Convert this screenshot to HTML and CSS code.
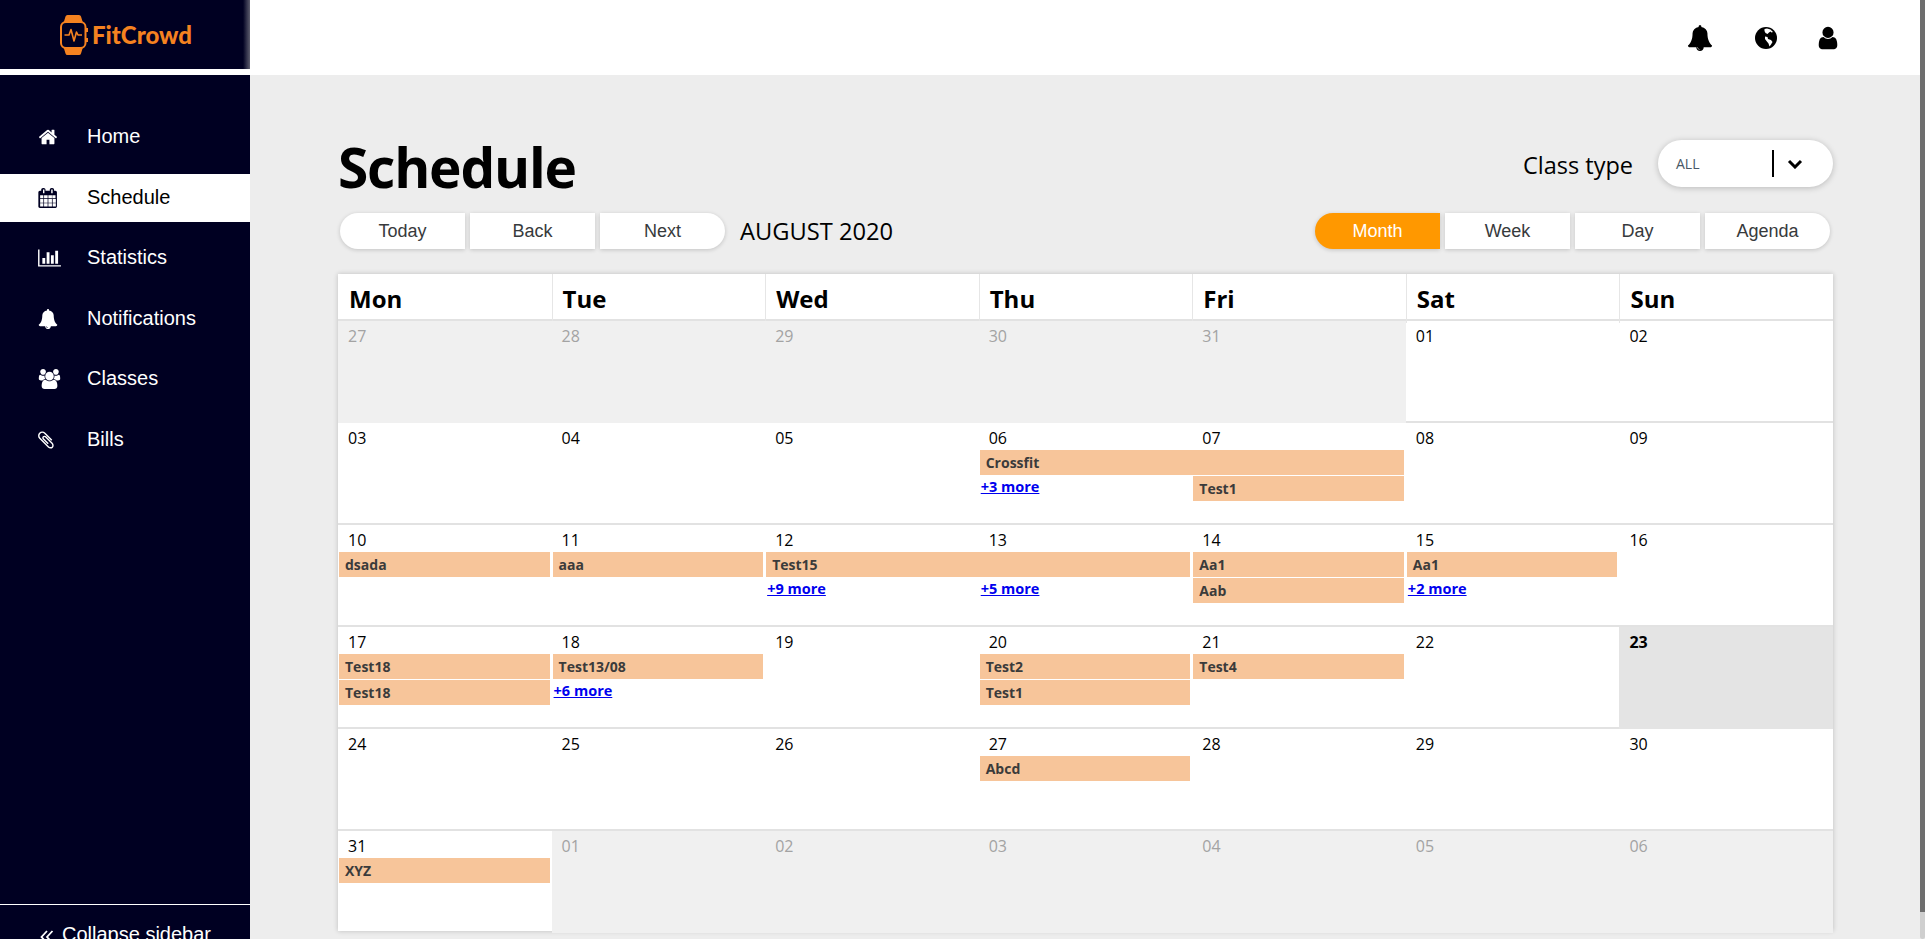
FILE: index.html
```html
<!DOCTYPE html>
<html lang="en">
<head>
<meta charset="utf-8">
<title>FitCrowd Schedule</title>
<link rel="stylesheet" href="styles.css">
</head>
<body>
<div class="app">
  <aside class="sidebar">
    <div class="brand">
      <svg class="watch" viewBox="0 0 28 40"><path class="watch-band" d="M3.500 8 5.500 1.500Q5.900 0 7.500 0H19Q20.600 0 21 1.500L23 8ZM3.500 32H23L21 38.500Q20.600 40 19 40H7.500Q5.900 40 5.500 38.500Z"/><rect class="watch-case" x="1" y="7" width="24.500" height="26" rx="5"/><path class="watch-line" d="M4.500 20H9L11 14.500 14 26 16.500 17 18 20H22"/><rect class="watch-btn" x="26" y="13" width="2" height="4"/><rect class="watch-btn" x="26" y="23" width="2" height="4"/></svg>
      <span class="brand-name">FitCrowd</span>
    </div>
    <nav class="nav">
      <a class="nav-item"><svg class="nav-icon" viewBox="0 0 1792 1792"><path d="M1472 992v480q0 26-19 45t-45 19h-384v-384h-256v384h-384q-26 0-45-19t-19-45v-480q0-1 .5-3t.5-3l575-474 575 474q1 2 1 6zm223-69l-62 74q-8 9-21 11h-3q-13 0-21-7l-692-577-692 577q-12 8-24 7-13-2-21-11l-62-74q-8-10-7-23.500t11-21.500l719-599q32-26 76-26t76 26l244 204v-195q0-14 9-23t23-9h192q14 0 23 9t9 23v408l219 182q10 8 11 21.500t-7 23.500z"/></svg><span>Home</span></a>
      <a class="nav-item is-active"><svg class="nav-icon" viewBox="0 0 1792 1792"><path d="M192 1664h288v-288h-288v288zm352 0h320v-288h-320v288zm-352-352h288v-320h-288v320zm352 0h320v-320h-320v320zm-352-384h288v-288h-288v288zm736 736h320v-288h-320v288zm-384-736h320v-288h-320v288zm768 736h288v-288h-288v288zm-384-352h320v-320h-320v320zm-352-864v-288q0-13-9.500-22.500t-22.500-9.500h-64q-13 0-22.500 9.500t-9.500 22.500v288q0 13 9.500 22.500t22.500 9.500h64q13 0 22.500-9.500t9.500-22.500zm736 864h288v-320h-288v320zm-384-384h320v-288h-320v288zm352 0h288v-288h-288v288zm32-480v-288q0-13-9.500-22.500t-22.500-9.500h-64q-13 0-22.500 9.500t-9.500 22.500v288q0 13 9.500 22.500t22.500 9.500h64q13 0 22.500-9.500t9.500-22.500zm384-64v1280q0 52-38 90t-90 38h-1408q-52 0-90-38t-38-90v-1280q0-52 38-90t90-38h128v-96q0-66 47-113t113-47h64q66 0 113 47t47 113v96h384v-96q0-66 47-113t113-47h64q66 0 113 47t47 113v96h128q52 0 90 38t38 90z"/></svg><span>Schedule</span></a>
      <a class="nav-item"><svg class="nav-icon nav-icon-wide" viewBox="0 0 2048 1792"><path d="M640 896v512h-256v-512h256zm384-512v1024h-256v-1024h256zm1024 1152v128h-2048v-1536h128v1408h1920zm-640-896v768h-256v-768h256zm384-384v1152h-256v-1152h256z"/></svg><span>Statistics</span></a>
      <a class="nav-item"><svg class="nav-icon" viewBox="0 0 1792 1792"><path d="M912 1696q0-16-16-16-59 0-101.500-42.500t-42.500-101.500q0-16-16-16t-16 16q0 73 51.500 124.500t124.500 51.500q16 0 16-16zm816-288q0 52-38 90t-90 38h-448q0 106-75 181t-181 75-181-75-75-181h-448q-52 0-90-38t-38-90q50-42 91-88t85-119.500 74.500-158.500 50-206 19.500-260q0-152 117-282.500t307-158.500q-8-19-8-39 0-40 28-68t68-28 68 28 28 68q0 20-8 39 190 28 307 158.500t117 282.500q0 139 19.500 260t50 206 74.500 158.500 85 119.500 91 88z"/></svg><span>Notifications</span></a>
      <a class="nav-item"><svg class="nav-icon nav-icon-wide" viewBox="0 0 1920 1792"><path d="M593 896q-162 5-265 128h-134q-82 0-138-40.500t-56-118.500q0-353 124-353 6 0 43.500 21t97.500 42.500 119 21.500q67 0 133-23-5 37-5 66 0 139 81 256zm1071 637q0 120-73 189.500t-194 69.500h-874q-121 0-194-69.500t-73-189.500q0-53 3.500-103.500t14-109 26.500-108.500 43-97.500 62-81 85.500-53.500 111.500-20q10 0 43 21.500t73 48 107 48 135 21.500 135-21.500 107-48 73-48 43-21.500q61 0 111.500 20t85.500 53.500 62 81 43 97.500 26.500 108.500 14 109 3.500 103.500zm-1024-1277q0 106-75 181t-181 75-181-75-75-181 75-181 181-75 181 75 75 181zm704 384q0 159-112.500 271.500t-271.500 112.500-271.500-112.500-112.500-271.500 112.500-271.500 271.500-112.500 271.500 112.500 112.500 271.500zm576 225q0 78-56 118.500t-138 40.500h-134q-103-123-265-128 81-117 81-256 0-29-5-66 66 23 133 23 59 0 119-21.500t97.500-42.500 43.500-21q124 0 124 353zm-128-609q0 106-75 181t-181 75-181-75-75-181 75-181 181-75 181 75 75 181z"/></svg><span>Classes</span></a>
      <a class="nav-item"><svg class="nav-icon" viewBox="0 0 1792 1792"><path d="M1404 1385q0 117-79 196t-196 79q-135 0-235-100l-777-776q-113-115-113-271 0-159 110-270t269-111q158 0 273 113l605 606q10 10 10 22 0 16-30.500 46.500t-46.500 30.500q-13 0-23-10l-606-607q-79-77-181-77-106 0-179 75t-73 181q0 105 76 181l776 777q63 63 145 63 64 0 106-42t42-106q0-82-63-145l-581-581q-26-24-60-24-29 0-48 19t-19 48q0 32 25 59l410 410q10 10 10 22 0 16-31 47t-47 31q-12 0-22-10l-410-410q-63-61-63-149 0-82 57-139t139-57q88 0 149 63l581 581q100 98 100 235z"/></svg><span>Bills</span></a>
    </nav>
    <div class="collapse"><svg class="collapse-icon" viewBox="0 0 14 14"><path d="M7 1 1.500 7 7 13M12.500 1 7 7 12.500 13"/></svg><span>Collapse sidebar</span></div>
  </aside>
  <div class="main">
    <header class="topbar">
      <svg class="top-icon" viewBox="0 0 1792 1792"><path d="M912 1696q0-16-16-16-59 0-101.500-42.500t-42.500-101.500q0-16-16-16t-16 16q0 73 51.500 124.500t124.500 51.500q16 0 16-16zm816-288q0 52-38 90t-90 38h-448q0 106-75 181t-181 75-181-75-75-181h-448q-52 0-90-38t-38-90q50-42 91-88t85-119.500 74.500-158.500 50-206 19.500-260q0-152 117-282.500t307-158.500q-8-19-8-39 0-40 28-68t68-28 68 28 28 68q0 20-8 39 190 28 307 158.500t117 282.500q0 139 19.500 260t50 206 74.500 158.500 85 119.500 91 88z"/></svg>
      <svg class="top-icon top-icon-globe" viewBox="0 0 24 24"><circle cx="12" cy="12" r="11"/><path class="globe-land" d="M10.500 3 13 2.500 16.500 3.500 19 6 17.500 6.500 16.500 5.500 15 6.500 13.500 8 11.500 7 10.500 5ZM11 10.500 13.500 11 14 13 17 14 18.500 16 17 18.500 15.500 20.500 14.500 17.500 12.500 15 11 13Z"/></svg>
      <svg class="top-icon" viewBox="0 0 1792 1792"><path d="M1536 1399q0 109-62.500 187t-150.500 78h-854q-88 0-150.500-78t-62.500-187q0-85 8.500-160.500t31.500-152 58.500-131 94-89 134.500-34.500q131 128 313 128t313-128q76 0 134.500 34.500t94 89 58.500 131 31.500 152 8.500 160.500zm-256-887q0 159-112.500 271.500t-271.500 112.500-271.500-112.500-112.500-271.500 112.500-271.500 271.500-112.500 271.500 112.500 112.500 271.500z"/></svg>
    </header>
    <main class="content">
      <div class="title-row">
        <h1 class="title">Schedule</h1>
        <div class="filter">
          <span class="filter-label">Class type</span>
          <div class="select"><span class="select-value">ALL</span><span class="select-divider"></span><svg class="select-chevron" viewBox="0 0 16 10"><path d="M2 2 8 8 14 2"/></svg></div>
        </div>
      </div>
      <div class="toolbar">
        <div class="btn-group"><button class="btn">Today</button><button class="btn">Back</button><button class="btn">Next</button></div>
        <span class="month-label">AUGUST 2020</span>
        <div class="btn-group btn-group-right"><button class="btn is-on">Month</button><button class="btn">Week</button><button class="btn">Day</button><button class="btn">Agenda</button></div>
      </div>
      <section class="calendar">
        <div class="head"><div>Mon</div><div>Tue</div><div>Wed</div><div>Thu</div><div>Fri</div><div>Sat</div><div>Sun</div></div>

        <div class="week">
          <div class="d off">27</div><div class="d off">28</div><div class="d off">29</div><div class="d off">30</div><div class="d off">31</div><div class="d">01</div><div class="d">02</div>
        </div>

        <div class="week">
          <div class="d">03</div><div class="d">04</div><div class="d">05</div><div class="d">06</div><div class="d">07</div><div class="d">08</div><div class="d">09</div>
          <div class="ev r1 c4 s2">Crossfit</div>
          <a class="more r2 c4">+3 more</a>
          <div class="ev r2 c5">Test1</div>
        </div>

        <div class="week">
          <div class="d">10</div><div class="d">11</div><div class="d">12</div><div class="d">13</div><div class="d">14</div><div class="d">15</div><div class="d">16</div>
          <div class="ev r1 c1">dsada</div>
          <div class="ev r1 c2">aaa</div>
          <div class="ev r1 c3 s2">Test15</div>
          <div class="ev r1 c5">Aa1</div>
          <div class="ev r1 c6">Aa1</div>
          <a class="more r2 c3">+9 more</a>
          <a class="more r2 c4">+5 more</a>
          <div class="ev r2 c5">Aab</div>
          <a class="more r2 c6">+2 more</a>
        </div>

        <div class="week">
          <div class="d">17</div><div class="d">18</div><div class="d">19</div><div class="d">20</div><div class="d">21</div><div class="d">22</div><div class="d today">23</div>
          <div class="ev r1 c1">Test18</div>
          <div class="ev r1 c2">Test13/08</div>
          <div class="ev r1 c4">Test2</div>
          <div class="ev r1 c5">Test4</div>
          <div class="ev r2 c1">Test18</div>
          <a class="more r2 c2">+6 more</a>
          <div class="ev r2 c4">Test1</div>
        </div>

        <div class="week">
          <div class="d">24</div><div class="d">25</div><div class="d">26</div><div class="d">27</div><div class="d">28</div><div class="d">29</div><div class="d">30</div>
          <div class="ev r1 c4">Abcd</div>
        </div>

        <div class="week">
          <div class="d">31</div><div class="d off">01</div><div class="d off">02</div><div class="d off">03</div><div class="d off">04</div><div class="d off">05</div><div class="d off">06</div>
          <div class="ev r1 c1">XYZ</div>
        </div>
      </section>
    </main>
  </div>
  <div class="scrollbar"><div class="scroll-thumb"></div></div>
</div>
</body>
</html>
```
FILE: styles.css
```css
* { box-sizing: border-box; }
html, body { margin: 0; height: 100%; overflow: hidden; }
body { background: #ededed; font-family: "Open Sans", "Noto Sans", sans-serif; color: #000; }

.app { display: grid; grid-template-columns: 250px 1fr 5px; height: 939px; overflow: hidden; }

/* sidebar */
.sidebar { display: flex; flex-direction: column; background: #000022; height: 939px; color: #fff; font-family: "Liberation Sans", Arial, sans-serif; overflow: hidden; }
.brand { height: 69px; flex: none; display: flex; align-items: center; padding-left: 60px; gap: 4px; background: linear-gradient(90deg, #000022 243px, #5d5d6e 250px); }
.watch { width: 28px; height: 40px; flex: none; }
.watch-band { fill: #f58220; }
.watch-case { fill: #000022; stroke: #f58220; stroke-width: 2; }
.watch-line { fill: none; stroke: #f58220; stroke-width: 1.6; stroke-linejoin: round; }
.watch-btn { fill: #f58220; }
.brand-name { font-family: "Lato", sans-serif; font-weight: 900; font-size: 24px; color: #f58220; line-height: 1; margin-top: 1px; }
.nav { flex: 1; display: flex; flex-direction: column; gap: 12.5px; border-top: 6px solid #fff; padding-top: 38px; }
.nav-item { display: flex; align-items: center; height: 48px; padding-left: 38px; font-size: 20px; line-height: 46px; color: #fff; }
.nav-item span { height: 48px; }
.nav-icon { width: 20px; height: 20px; fill: #fff; flex: none; margin-right: 29px; }
.nav-icon-wide { width: 23px; margin-right: 26px; }
.is-active { background: #fff; color: #000; }
.is-active .nav-icon { fill: #000022; }
.collapse { height: 35px; flex: none; border-top: 1px solid #fff; padding: 17px 0 0 40px; display: flex; align-items: flex-start; font-size: 20px; line-height: 24px; }
.collapse-icon { width: 14px; height: 14px; margin: 8px 8px 0 0; fill: none; stroke: #fff; stroke-width: 1.8; flex: none; }

/* header */
.main { display: flex; flex-direction: column; min-width: 0; overflow: hidden; }
.topbar { height: 75px; flex: none; background: #fff; display: flex; align-items: center; justify-content: flex-end; gap: 39px; padding: 0 79px 0 0; }
.top-icon { width: 26px; height: 26px; fill: #000; flex: none; }
.top-icon-globe { width: 24px; height: 24px; margin-left: 2px; margin-right: -2px; }
.globe-land { fill: #fff; }

/* content */
.content { padding: 63px 87px 0 88px; }
.title-row { display: flex; justify-content: space-between; align-items: flex-start; height: 75px; }
.title { margin: 0; font-size: 55px; line-height: 58px; font-weight: 700; letter-spacing: -1.2px; }
.filter { display: flex; align-items: center; gap: 25px; }
.filter-label { font-size: 23.500px; line-height: 47px; margin-top: 4px; }
.select { width: 175px; height: 47px; border-radius: 24px; background: #fff; display: flex; align-items: center; box-shadow: 0 1px 6px rgba(0,0,0,.22); padding-left: 18px; }
.select-value { width: 96px; font-size: 14px; color: #495766; }
.select-divider { width: 2px; height: 27px; background: #000; }
.select-chevron { width: 16px; height: 10px; margin-left: 13px; fill: none; stroke: #000; stroke-width: 3; }

.toolbar { display: flex; align-items: center; height: 36px; margin-bottom: 25px; padding-left: 2px; }
.btn-group { display: flex; gap: 5px; }
.btn-group-right { margin-left: auto; margin-right: 3px; }
.btn { width: 125px; height: 36px; border: 0; background: #fff; font-family: "Liberation Sans", Arial, sans-serif; font-size: 18px; color: #373a3c; box-shadow: 0 1px 4px rgba(0,0,0,.18); padding: 0; }
.btn:first-child { border-radius: 18px 0 0 18px; }
.btn:last-child { border-radius: 0 18px 18px 0; }
.is-on { background: #ff9800; color: #fff; }
.month-label { font-size: 23.700px; margin-left: 15px; }

/* calendar */
.calendar { background: #fff; box-shadow: 0 0 5px rgba(0,0,0,.2); }
.head { display: grid; grid-template-columns: repeat(7, 1fr); height: 47px; border-bottom: 2px solid #e2e2e2; }
.head div { font-size: 24px; font-weight: 700; line-height: 49px; padding-left: 10px; border-left: 1px solid #e6e6e6; }
.head div:first-child { border-left: 0; padding-left: 11px; }
.week { display: grid; grid-template-columns: repeat(7, 1fr); grid-template-rows: 27px 26px 25px 24px; height: 102px; border-bottom: 2px solid #e2e2e2; }
.week:last-child { border-bottom: 0; height: 100px; }
.d { grid-row: 1 / -1; font-size: 16px; line-height: 22px; padding: 4px 0 0 10px; }
.d:nth-child(1) { grid-column: 1; } .d:nth-child(2) { grid-column: 2; } .d:nth-child(3) { grid-column: 3; } .d:nth-child(4) { grid-column: 4; } .d:nth-child(5) { grid-column: 5; } .d:nth-child(6) { grid-column: 6; } .d:nth-child(7) { grid-column: 7; }
.off { background: #f0f0f0; color: #a3a3a3; }
.today { background: #e4e4e4; font-weight: 700; }

.ev, .more { align-self: start; font-weight: 700; margin-left: 1px; z-index: 1; }
.ev { height: 25px; line-height: 25px; font-size: 14px; background: #f7c59a; color: #3b3b3b; padding-left: 6px; margin-right: 2px; }
.more { color: #0000ee; text-decoration: underline; font-size: 14.500px; line-height: 21px; height: 21px; margin-left: 2px; }
.r1 { grid-row: 2; }
.r2 { grid-row: 3; }
.c1 { grid-column: 1; } .c2 { grid-column: 2; } .c3 { grid-column: 3; } .c4 { grid-column: 4; } .c5 { grid-column: 5; } .c6 { grid-column: 6; }
.c3.s2 { grid-column: 3 / span 2; }
.c4.s2 { grid-column: 4 / span 2; }

/* scrollbar */
.scrollbar { background: #cfcfcf; border-radius: 0 0 3px 3px; }
.scroll-thumb { height: 912px; background: #6e6e6e; }
```
